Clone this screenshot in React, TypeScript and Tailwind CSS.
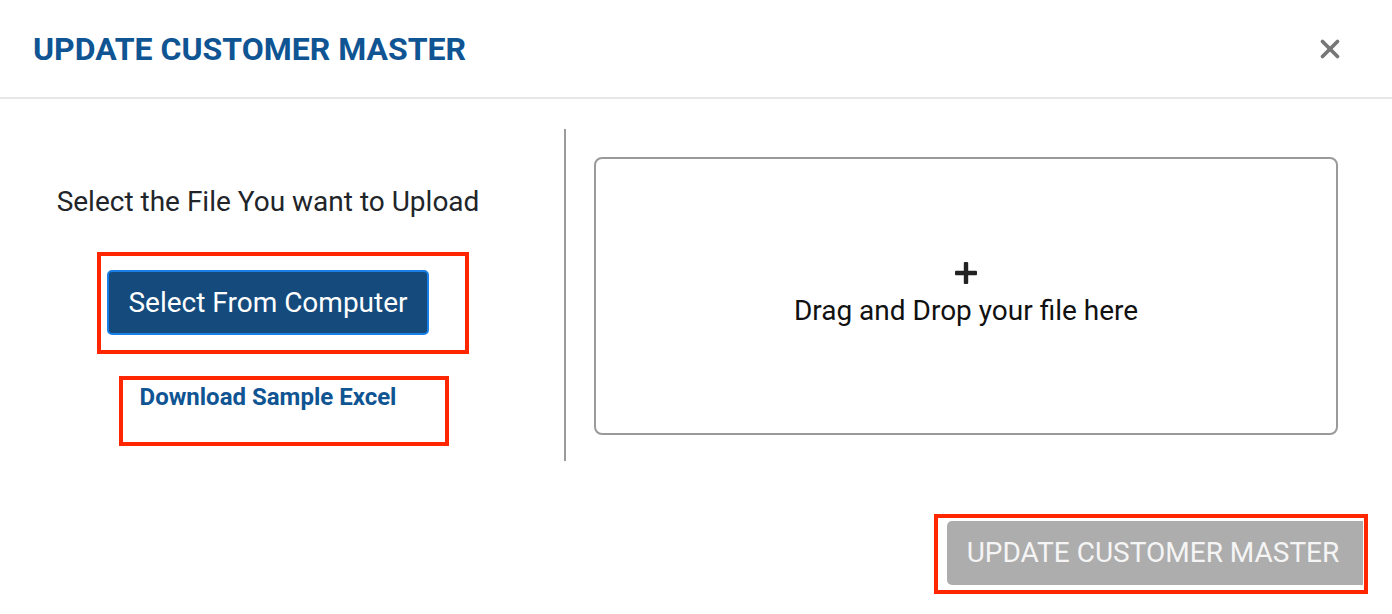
import { X } from "lucide-react";

function AnnotationBox({ className }: { className: string }) {
  return <span className={`pointer-events-none absolute border-4 border-[#ff2600] ${className}`} />;
}

export default function App() {
  return (
    <div className="h-[614px] w-[1392px] overflow-hidden bg-white font-['Roboto',sans-serif] text-[#212529]">
      <header className="flex h-[99px] items-center justify-between border-b-2 border-[#e6e6e6] pl-[33px] pr-[47px]">
        <h1 className="text-[32px] font-bold text-[#0f5493]">UPDATE CUSTOMER MASTER</h1>
        <button type="button" aria-label="Close" className="text-[#777]">
          <X size={30} strokeWidth={3} />
        </button>
      </header>

      <div className="flex pt-[30px]">
        <div className="flex w-[536px] flex-col items-center pt-[55px]">
          <p className="text-[28px] leading-[36px]">Select the File You want to Upload</p>
          <div className="relative mt-[50px]">
            <button
              type="button"
              className="flex h-[65px] w-[322px] items-center justify-center rounded-[5px] border-2 border-[#1a7fe6] bg-[#144a7c] text-[28px] text-white"
            >
              Select From Computer
            </button>
            <AnnotationBox className="-top-[18px] -left-[10px] -right-[40px] -bottom-[19px]" />
          </div>
          <div className="relative mt-[46px]">
            <a href="#" className="block text-[24px] font-bold leading-[32px] text-[#0f5493]">
              Download Sample Excel
            </a>
            <AnnotationBox className="-top-[5px] -left-[21px] -right-[53px] -bottom-[33px]" />
          </div>
        </div>

        <div className="ml-[28px] h-[332px] w-[2px] bg-[#9a9a9a]" />

        <div className="ml-[28px] mt-[28px] flex h-[278px] w-[744px] flex-col items-center justify-center rounded-[8px] border-2 border-[#9a9a9a] pb-[2px]">
          <svg width="22" height="22" viewBox="0 0 22 22" className="text-[#222]">
            <rect x="8.8" y="0" width="4.4" height="22" rx="1" fill="currentColor" />
            <rect x="0" y="8.8" width="22" height="4.4" rx="1" fill="currentColor" />
          </svg>
          <p className="mt-[10px] text-[28px] leading-[34px] text-[#111]">Drag and Drop your file here</p>
        </div>
      </div>

      <div className="flex justify-end pr-[29px] pt-[60px]">
        <div className="relative">
          <button
            type="button"
            disabled
            className="flex h-[64px] w-[416px] items-center justify-center rounded-l-[5px] bg-[#adadad] pr-[4px] text-[28px] text-[#f5f5f5]"
          >
            UPDATE CUSTOMER MASTER
          </button>
          <AnnotationBox className="-top-[7px] -left-[13px] -right-[5px] -bottom-[9px]" />
        </div>
      </div>
    </div>
  );
}
